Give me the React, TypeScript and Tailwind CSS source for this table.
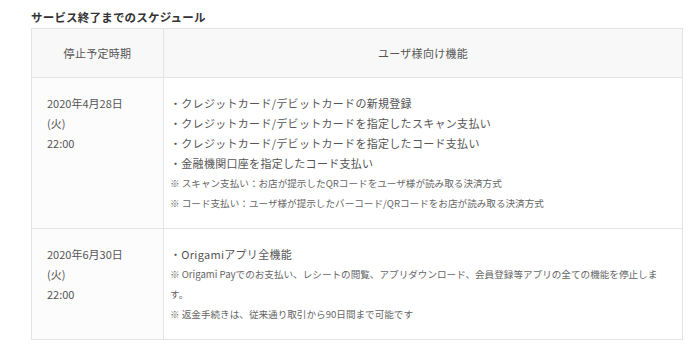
const FONT = "font-['Noto_Sans_CJK_JP','Noto_Sans',sans-serif]";

const ROWS = [
  {
    date: "2020年4月28日",
    day: "(火)",
    time: "22:00",
    items: [
      "・クレジットカード/デビットカードの新規登録",
      "・クレジットカード/デビットカードを指定したスキャン支払い",
      "・クレジットカード/デビットカードを指定したコード支払い",
      "・金融機関口座を指定したコード支払い",
    ],
    notes: [
      "※ スキャン支払い：お店が提示したQRコードをユーザ様が読み取る決済方式",
      "※ コード支払い：ユーザ様が提示したバーコード/QRコードをお店が読み取る決済方式",
    ],
  },
  {
    date: "2020年6月30日",
    day: "(火)",
    time: "22:00",
    items: ["・Origamiアプリ全機能"],
    notes: [
      "※ Origami Payでのお支払い、レシートの閲覧、アプリダウンロード、会員登録等アプリの全ての機能を停止しま\nす。",
      "※ 返金手続きは、従来通り取引から90日間まで可能です",
    ],
  },
];

export default function App() {
  return (
    <div className={`w-[700px] h-[348px] bg-white pl-[31px] pt-[9px] ${FONT}`}>
      <h2 className="text-[11.5px] leading-[16px] font-bold text-[#333] tracking-[0.2px] mb-[3px]">
        サービス終了までのスケジュール
      </h2>

      <div className="w-[652px] border border-[#e4e4e4]">
        {/* header */}
        <div className="grid grid-cols-[132px_1fr] h-[49px] bg-[#f8f8f8] border-b border-[#e4e4e4] text-[11px] tracking-[0.3px] text-[#555]">
          <div className="flex items-center justify-center border-r border-[#e4e4e4]">停止予定時期</div>
          <div className="flex items-center justify-center">ユーザ様向け機能</div>
        </div>

        {ROWS.map((row, i) => (
          <div
            key={row.date}
            className={`grid grid-cols-[132px_1fr] ${i < ROWS.length - 1 ? "border-b border-[#e4e4e4]" : ""}`}
          >
            <div className="bg-[#fcfcfc] border-r border-[#e4e4e4] pl-[15px] py-[15px] text-[11px] leading-[20px] text-[#555]">
              <div>{row.date}</div>
              <div>{row.day}</div>
              <div>{row.time}</div>
            </div>
            <div className="pl-[6px] py-[15px] text-[#555]">
              {row.items.map((t) => (
                <div key={t} className="text-[11px] leading-[20px] tracking-[0.3px]">{t}</div>
              ))}
              {row.notes.map((t) => (
                <div key={t} className="text-[9.6px] leading-[20px] text-[#666] whitespace-pre-line">{t}</div>
              ))}
            </div>
          </div>
        ))}
      </div>
    </div>
  );
}
